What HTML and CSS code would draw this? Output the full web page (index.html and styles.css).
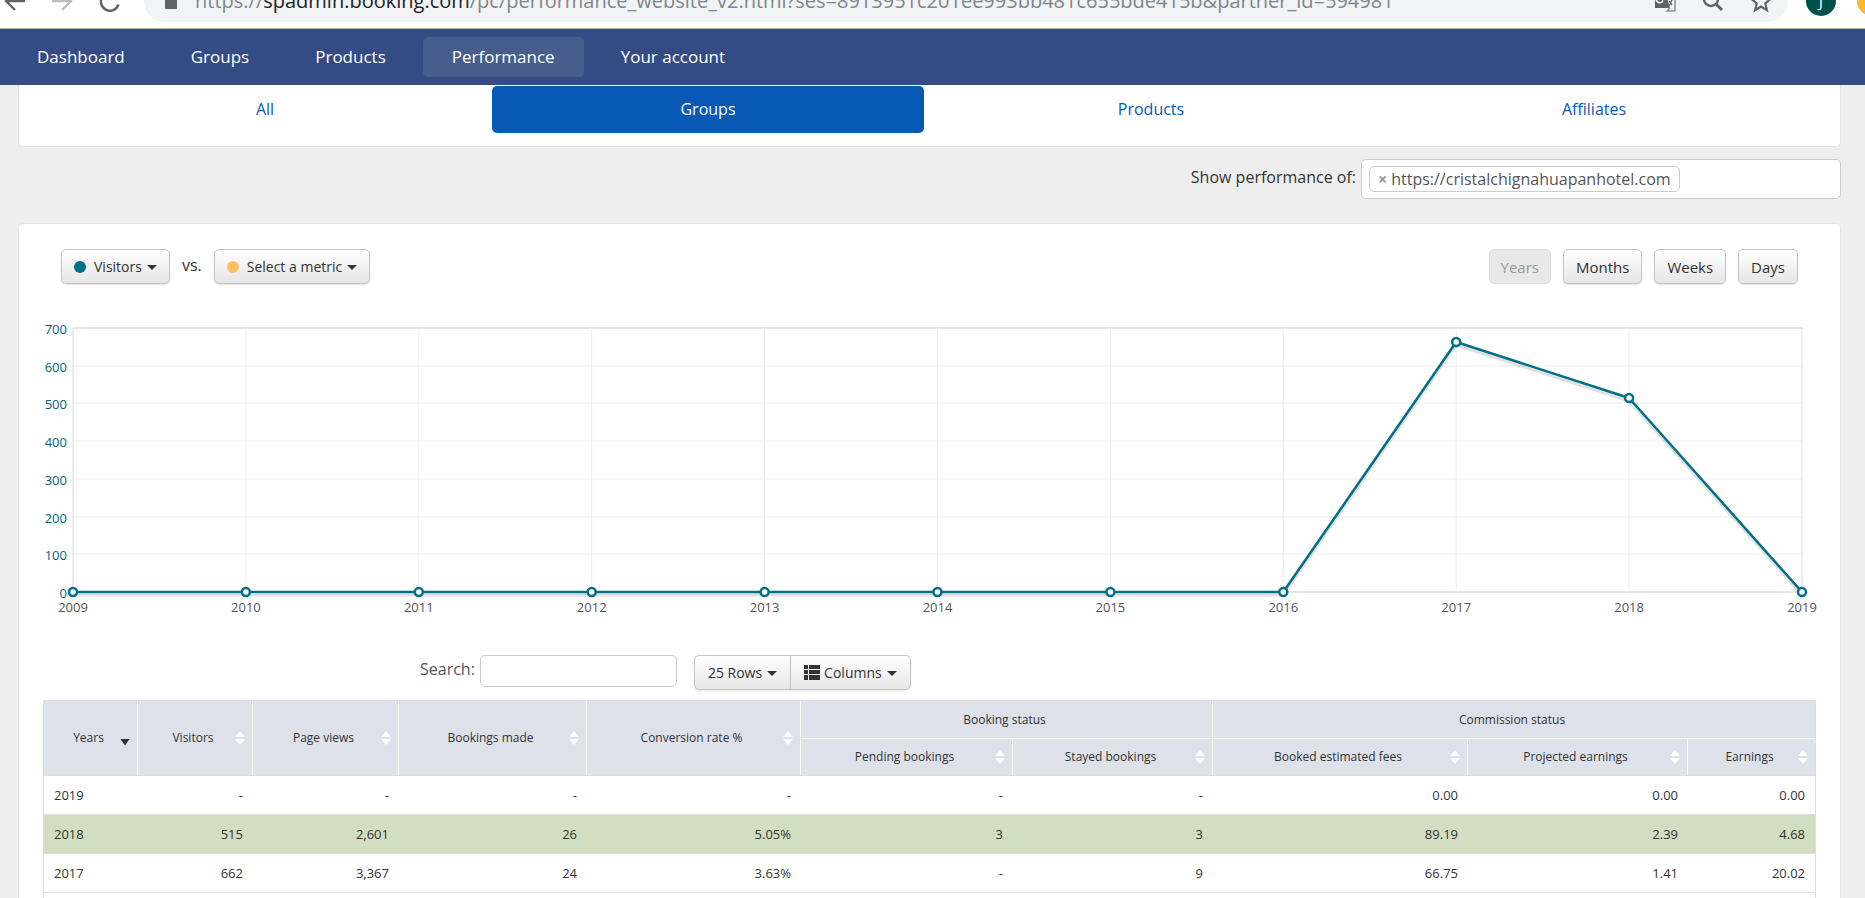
FILE: index.html
```
<!DOCTYPE html>
<html lang="en">
<head>
    <title>Performance</title>
    <meta charset="UTF-8">
    <meta name="viewport" content="width=device-width, initial-scale=1.0">
    <link rel="stylesheet" href="styles.css">
</head>
<body>
    <div class="browser">
        <button type="button" class="tool" aria-label="Back">
            <svg width="24" height="24" viewBox="0 0 24 24"><path d="M22 12H3M12 3l-9 9 9 9" fill="none" stroke="#5f6368" stroke-width="2.4"/></svg>
        </button>
        <button type="button" class="tool" aria-label="Forward">
            <svg width="24" height="24" viewBox="0 0 24 24"><path d="M2 12h19M12 3l9 9-9 9" fill="none" stroke="#babcbe" stroke-width="2.4"/></svg>
        </button>
        <button type="button" class="tool" aria-label="Reload">
            <svg width="24" height="24" viewBox="0 0 24 24"><path d="M21.500 15.500A9 9 0 1 1 19.500 6.500L22 9" fill="none" stroke="#5f6368" stroke-width="2.4"/></svg>
        </button>
        <div class="omnibox">
            <svg width="14" height="20" viewBox="0 0 14 20"><path d="M3.500 8V5a3.500 3.500 0 0 1 7 0v3" fill="none" stroke="#5f6368" stroke-width="2"/><rect x="1" y="7" width="12" height="11" rx="1" fill="#5f6368"/></svg>
            <span class="url">https://<b>spadmin.booking.com</b>/pc/performance_website_v2.html?ses=8913951c201ee993bb481c655bde415b&amp;partner_id=594981</span>
            <button type="button" class="tool" aria-label="Translate">
                <svg width="24" height="24" viewBox="0 0 24 24"><path d="M2 2h10l5 17H2z" fill="#5f6368"/><path d="M14 6h8v16h-8l3-3" fill="none" stroke="#8b8e92" stroke-width="1.500"/><path d="M10.500 9.500H7.500M10 11.500A3.500 3.500 0 1 1 9 7.500" fill="none" stroke="#fff" stroke-width="1.500"/><path d="M15 10h5M16 17l3-6M16 12l3 4" fill="none" stroke="#5f6368" stroke-width="1.300"/></svg>
            </button>
            <button type="button" class="tool" aria-label="Zoom">
                <svg width="24" height="24" viewBox="0 0 24 24"><circle cx="10" cy="10" r="7" fill="none" stroke="#5f6368" stroke-width="2.4"/><path d="M15 15l6 6" stroke="#5f6368" stroke-width="3"/></svg>
            </button>
            <button type="button" class="tool" aria-label="Bookmark">
                <svg width="24" height="24" viewBox="0 0 24 24"><path d="M12 3l2.700 6.300 6.800.6-5.200 4.500 1.600 6.700-5.900-3.600-5.900 3.600 1.600-6.700-5.200-4.500 6.800-.6z" fill="none" stroke="#5f6368" stroke-width="2.2"/></svg>
            </button>
        </div>
        <span class="avatar">J</span>
        <span class="avatar update"></span>
    </div>

    <nav class="nav">
        <a href="#">Dashboard</a>
        <a href="#">Groups</a>
        <a href="#">Products</a>
        <a href="#" class="active">Performance</a>
        <a href="#">Your account</a>
    </nav>

    <main class="page">
        <div class="tabs">
            <a href="#">All</a>
            <a href="#" class="active">Groups</a>
            <a href="#">Products</a>
            <a href="#">Affiliates</a>
        </div>

        <div class="filter">
            <label for="site">Show performance of:</label>
            <div class="tag-box">
                <span class="tag"><button type="button" aria-label="Remove">×</button>https://cristalchignahuapanhotel.com</span>
                <input type="text" id="site">
            </div>
        </div>

        <div class="panel">
            <div class="toolbar">
                <button type="button" class="btn"><span class="dot visitors"></span>Visitors<span class="caret"></span></button>
                <span class="vs">vs.</span>
                <button type="button" class="btn"><span class="dot metric"></span>Select a metric<span class="caret"></span></button>
                <div class="periods">
                    <button type="button" class="btn" disabled>Years</button>
                    <button type="button" class="btn">Months</button>
                    <button type="button" class="btn">Weeks</button>
                    <button type="button" class="btn">Days</button>
                </div>
            </div>

            <svg class="chart" id="chart"></svg>

            <div class="table-tools">
                <label for="search">Search:</label>
                <input type="text" id="search">
                <div class="btn-group">
                    <button type="button" class="btn">25 Rows<span class="caret"></span></button>
                    <button type="button" class="btn">
                        <svg width="16" height="16" viewBox="0 0 16 16"><path d="M0 0h4v4H0zM5 0h11v4H5zM0 5h4v4H0zM5 5h11v4H5zM0 10h4v5H0zM5 10h11v5H5z" fill="#333"/></svg>
                        Columns<span class="caret"></span>
                    </button>
                </div>
            </div>

            <table class="stats">
                <colgroup>
                    <col class="c-year"><col class="c-visitors"><col class="c-views"><col class="c-made"><col class="c-rate">
                    <col class="c-pending"><col class="c-stayed"><col class="c-fees"><col class="c-projected"><col class="c-earnings">
                </colgroup>
                <thead>
                    <tr>
                        <th rowspan="2"><button type="button" class="sort desc">Years</button></th>
                        <th rowspan="2"><button type="button" class="sort">Visitors</button></th>
                        <th rowspan="2"><button type="button" class="sort">Page views</button></th>
                        <th rowspan="2"><button type="button" class="sort">Bookings made</button></th>
                        <th rowspan="2"><button type="button" class="sort">Conversion rate %</button></th>
                        <th colspan="2">Booking status</th>
                        <th colspan="3">Commission status</th>
                    </tr>
                    <tr>
                        <th><button type="button" class="sort">Pending bookings</button></th>
                        <th><button type="button" class="sort">Stayed bookings</button></th>
                        <th><button type="button" class="sort">Booked estimated fees</button></th>
                        <th><button type="button" class="sort">Projected earnings</button></th>
                        <th><button type="button" class="sort">Earnings</button></th>
                    </tr>
                </thead>
                <tbody>
                    <tr><td>2019</td><td>-</td><td>-</td><td>-</td><td>-</td><td>-</td><td>-</td><td>0.00</td><td>0.00</td><td>0.00</td></tr>
                    <tr class="selected"><td>2018</td><td>515</td><td>2,601</td><td>26</td><td>5.05%</td><td>3</td><td>3</td><td>89.19</td><td>2.39</td><td>4.68</td></tr>
                    <tr><td>2017</td><td>662</td><td>3,367</td><td>24</td><td>3.63%</td><td>-</td><td>9</td><td>66.75</td><td>1.41</td><td>20.02</td></tr>
                    <tr><td colspan="10"></td></tr>
                </tbody>
            </table>
        </div>
    </main>

    <script>
        var visitors = [0, 0, 0, 0, 0, 0, 0, 0, 662, 515, 0];
        var firstYear = 2009;
        var max = 700;
        var height = 264;
        var last = visitors.length - 1;

        function yPos(value) {
            return Math.round(height - value / max * height);
        }

        function line(x1, y1, x2, y2, name) {
            return '<line class="' + name + '" x1="' + x1 + '%" y1="' + y1 + '" x2="' + x2 + '%" y2="' + y2 + '"/>';
        }

        var grid = "", series = "", shadow = "", points = "", labels = "";

        for (var v = 0; v <= max; v += 100) {
            grid += line(0, yPos(v), 100, yPos(v), v % max ? "grid" : "frame");
            labels += '<text class="y-label" x="-6" y="' + (yPos(v) + 6) + '">' + v + '</text>';
        }

        visitors.forEach(function (value, i) {
            var x = i / last * 100;
            grid += line(x, 0, x, height, i % last ? "grid" : "edge");
            if (i < last) {
                var next = (i + 1) / last * 100;
                shadow += line(x, yPos(value) + 3, next, yPos(visitors[i + 1]) + 3, "shadow");
                series += line(x, yPos(value), next, yPos(visitors[i + 1]), "series");
            }
            points += '<circle cx="' + x + '%" cy="' + yPos(value) + '" r="4"/>';
            labels += '<text class="x-label" x="' + x + '%" y="' + (height + 20) + '">' + (firstYear + i) + '</text>';
        });

        document.getElementById("chart").innerHTML = grid + shadow + series + points + labels;
    </script>
</body>
</html>
```
FILE: styles.css
```
* {
    box-sizing: border-box;
}

body {
    margin: 0;
    background-color: #eeeeee;
    color: #333333;
    font-family: "Open Sans", sans-serif;
    font-size: 16px;
    line-height: 20px;
    overflow: hidden;
}

button, input {
    font-family: inherit;
    font-size: inherit;
    line-height: inherit;
    color: inherit;
}

a {
    text-decoration: none;
}

/* browser bar, scrolled half out of view */
.browser {
    display: flex;
    align-items: flex-end;
    height: 29px;
    background-color: #ffffff;
    border-bottom: 1px solid #b5b5b0;
    overflow: hidden;
    padding: 0 0 6px 3px;
}

.tool {
    display: block;
    width: 24px;
    height: 24px;
    margin: 0 23px 9px 0;
    padding: 0;
    border: none;
    background: none;
    flex-shrink: 0;
}

.omnibox {
    display: flex;
    align-items: center;
    flex: 1;
    height: 42px;
    padding: 0 0 0 20px;
    border-radius: 21px;
    background-color: #f1f3f4;
}

.omnibox .tool {
    margin: 0 24px 0 0;
}

.omnibox .tool:last-child {
    margin-right: 15px;
}

.url {
    flex: 1;
    margin-left: 17px;
    font-size: 20px;
    color: #80868b;
    white-space: nowrap;
}

.url b {
    font-weight: normal;
    color: #202124;
}

.avatar {
    width: 30px;
    height: 30px;
    margin: 0 21px 6px 18px;
    border-radius: 50%;
    background-color: #00504a;
    color: #ffffff;
    text-align: center;
    line-height: 30px;
    flex-shrink: 0;
}

.avatar.update {
    margin: 0 -22px 6px 0;
    background-color: #f5b82e;
}

.nav {
    display: flex;
    gap: 8px;
    padding: 8px;
    background-color: #354b83;
}

.nav a {
    padding: 0 29px;
    border-radius: 5px;
    font-size: 17px;
    line-height: 40px;
    color: #ffffff;
}

.nav .active {
    background-color: #475d8c;
}

.page {
    padding: 0 24px 0 18px;
}

.tabs {
    display: grid;
    grid-template-columns: repeat(4, 1fr);
    gap: 11px;
    padding: 1px 30px 13px;
    background-color: #ffffff;
    border: 1px solid #e4e4e4;
    border-top: none;
    border-radius: 0 0 5px 5px;
}

.tabs a {
    border-radius: 5px;
    line-height: 47px;
    text-align: center;
    color: #0759b5;
}

.tabs .active {
    background-color: #0759b5;
    color: #ffffff;
}

.filter {
    display: flex;
    justify-content: flex-end;
    gap: 5px;
    padding: 12px 0 24px;
    line-height: 36px;
}

.tag-box {
    display: flex;
    align-items: center;
    width: 480px;
    height: 40px;
    padding: 0 7px;
    border: 1px solid #cccccc;
    border-radius: 5px;
    background-color: #ffffff;
}

.tag {
    display: flex;
    align-items: center;
    height: 26px;
    padding: 0 8px;
    border: 1px solid #cccccc;
    border-radius: 5px;
    color: #555555;
    white-space: nowrap;
}

.tag button {
    padding: 0 4px 0 0;
    border: none;
    background: none;
    color: #999999;
    font-weight: bold;
}

.tag-box input {
    flex: 1;
    min-width: 0;
    border: none;
}

.panel {
    padding: 25px 25px 60px 24px;
    background-color: #ffffff;
    border: 1px solid #e4e4e4;
    border-radius: 5px;
}

.toolbar {
    display: flex;
    gap: 12px;
    padding: 0 17px 0 18px;
}

.vs {
    line-height: 32px;
}

.periods {
    display: flex;
    gap: 12px;
    margin-left: auto;
}

.btn {
    display: flex;
    align-items: center;
    height: 35px;
    padding: 0 12px;
    border: 1px solid #c4c4c4;
    border-radius: 5px;
    background: linear-gradient(#ffffff, #e6e6e6);
    box-shadow: 0 1px 2px rgba(0, 0, 0, 0.1);
    font-size: 14px;
    white-space: nowrap;
}

.periods .btn {
    padding: 0 12px;
    font-size: 15px;
}

.periods .btn:disabled {
    padding: 0 11px;
    border-color: #dcdcdc;
    background: #e8e8e8;
    box-shadow: none;
    color: #999999;
}

.caret {
    margin: 2px 0 0 5px;
    border: 5px solid transparent;
    border-top-color: #333333;
    border-bottom: none;
}

.dot {
    width: 12px;
    height: 12px;
    margin-right: 8px;
    border-radius: 50%;
}

.visitors {
    background-color: #006f8a;
}

.metric {
    background-color: #ffc05c;
}

.chart {
    display: block;
    width: calc(100% - 43px);
    height: 264px;
    margin: 44px 13px 63px 30px;
    overflow: visible;
}

.chart .grid {
    stroke: #eeeeee;
}

.chart .frame {
    stroke: #e6e6e6;
    stroke-width: 2;
}

.chart .edge {
    stroke: #d8d8d8;
}

.chart .series {
    stroke: #006f8a;
    stroke-width: 2.5;
    stroke-linecap: round;
}

.chart .shadow {
    stroke: rgba(0, 0, 0, 0.12);
    stroke-width: 3;
}

.chart circle {
    fill: #ffffff;
    stroke: #006f8a;
    stroke-width: 2.5;
}

.chart text {
    font-size: 13px;
}

.y-label {
    fill: #006478;
    text-anchor: end;
}

.x-label {
    fill: #555555;
    text-anchor: middle;
}

.table-tools {
    display: flex;
    gap: 5px;
    margin: 0 0 10px 377px;
}

.table-tools label {
    line-height: 28px;
    color: #555555;
}

.table-tools input {
    width: 197px;
    height: 32px;
    border: 1px solid #cccccc;
    border-radius: 5px;
}

.btn-group {
    display: flex;
    margin-left: 12px;
}

.btn-group .btn {
    gap: 4px;
    padding: 0 13px;
    border-radius: 5px 0 0 5px;
}

.btn-group .btn + .btn {
    margin-left: -1px;
    border-radius: 0 5px 5px 0;
}

.btn-group .caret {
    margin-left: 1px;
}

.stats {
    width: 100%;
    table-layout: fixed;
    border-collapse: separate;
    border-spacing: 0;
    border: 1px solid #dddddd;
    font-size: 13px;
}

.c-year { width: 94px; }
.c-visitors { width: 115px; }
.c-views { width: 146px; }
.c-made { width: 188px; }
.c-rate { width: 214px; }
.c-pending { width: 212px; }
.c-stayed { width: 200px; }
.c-fees { width: 255px; }
.c-projected { width: 220px; }
.c-earnings { width: 127px; }

.stats th {
    height: 37px;
    padding: 0 4px 0 0;
    background-color: #dde1ea;
    border-right: 1px solid #ffffff;
    font-size: 12px;
    font-weight: normal;
}

.stats th:last-child {
    border-right: none;
}

.stats tr + tr th {
    border-top: 1px solid #ffffff;
}

.sort {
    display: flex;
    align-items: center;
    justify-content: space-between;
    width: 100%;
    padding: 0 3px;
    border: none;
    background: none;
}

.sort::before {
    content: "";
    width: 10px;
}

.sort::after {
    content: "";
    width: 10px;
    height: 14px;
    background-color: #ffffff;
    clip-path: polygon(50% 0, 100% 43%, 0 43%, 0 57%, 100% 57%, 50% 100%, 0 57%, 0 43%);
}

.sort.desc::after {
    height: 7px;
    margin-top: 8px;
    background-color: #333333;
    clip-path: polygon(0 0, 100% 0, 50% 100%);
}

.stats td {
    height: 39px;
    padding: 0 10px;
    border-top: 1px solid #dddddd;
    text-align: right;
}

.stats td:first-child {
    text-align: left;
}

.selected {
    background-color: #d1dec2;
}
```
